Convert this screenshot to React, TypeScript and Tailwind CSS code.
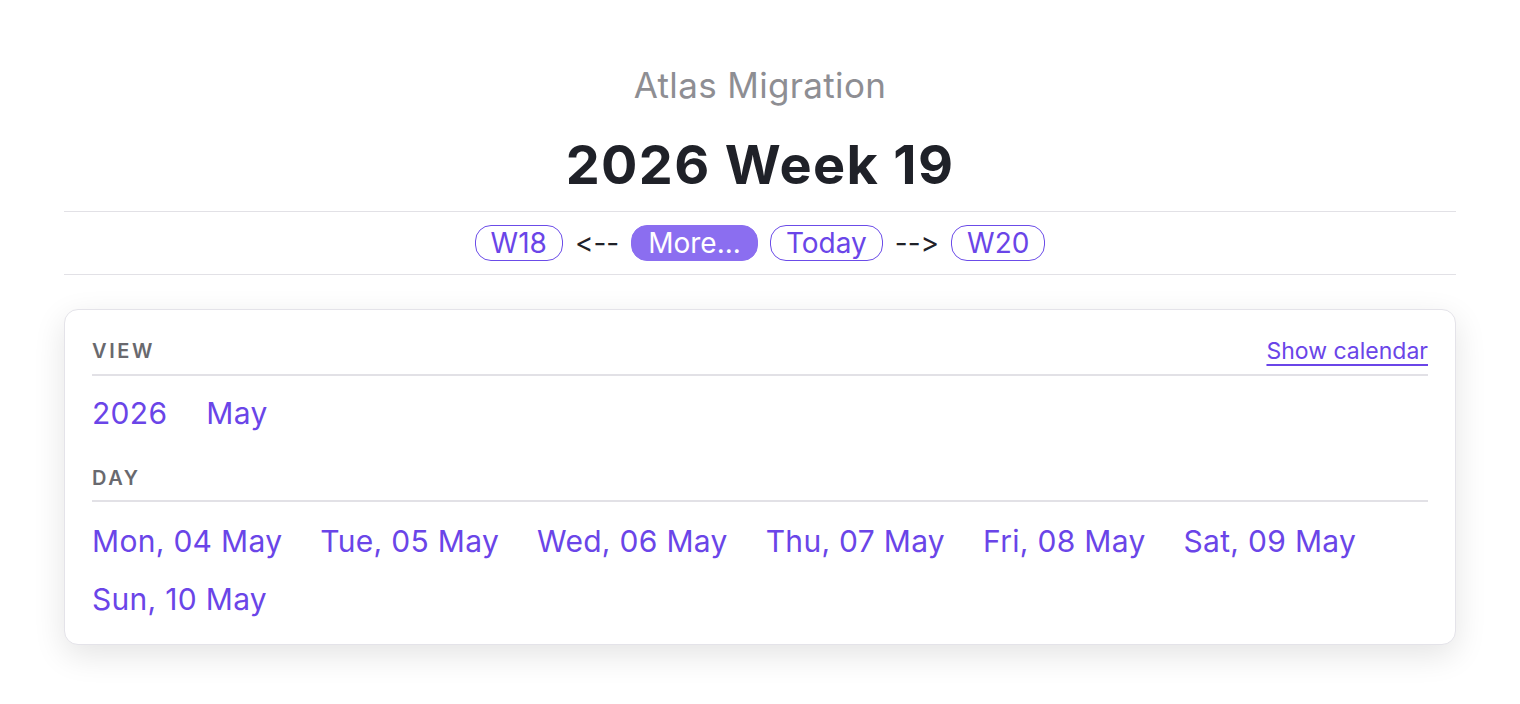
const days = [
  "Mon, 04 May",
  "Tue, 05 May",
  "Wed, 06 May",
  "Thu, 07 May",
  "Fri, 08 May",
  "Sat, 09 May",
  "Sun, 10 May",
];

function Pill({ label, filled }: { label: string; filled?: boolean }) {
  return (
    <a
      href="#"
      className={
        filled
          ? "flex h-9 items-center rounded-[16px] border-[1.5px] border-[#8b6ef0] bg-[#8b6ef0] px-[16px] text-[28px] leading-none text-white"
          : "flex h-9 items-center rounded-[16px] border-[1.5px] border-[#6b4ce8] px-[15px] text-[28px] leading-none text-[#6a45e8]"
      }
    >
      {label}
    </a>
  );
}

function Label({ children }: { children: string }) {
  return (
    <span className="text-[20px] font-semibold leading-6 tracking-[0.13em] text-[#69696e]">
      {children}
    </span>
  );
}

export default function App() {
  return (
    <div
      className="min-h-screen bg-white px-16 pt-[65px] [font-feature-settings:'calt'_0]"
      style={{ fontFamily: "Inter, 'Noto Sans', sans-serif" }}
    >
      <header className="text-center">
        <p className="text-[35px] leading-10 tracking-[0.01em] text-[#8e8e93]">Atlas Migration</p>
        <h1 className="mt-[30px] text-[54px] font-bold leading-[60px] tracking-[0.025em] text-[#1f2128]">
          2026 Week 19
        </h1>
      </header>

      <nav className="mt-[16px] flex items-center justify-center gap-3 border-y border-[#e2e1e6] py-[13px] text-[28px] leading-none text-[#1f2128]">
        <Pill label="W18" />
        <span>&lt;--</span>
        <Pill label="More..." filled />
        <Pill label="Today" />
        <span>--&gt;</span>
        <Pill label="W20" />
      </nav>

      <section className="mt-[34px] rounded-[14px] border border-[#e4e3e9] bg-white px-[27px] pb-[24px] pt-[29px] shadow-[0_10px_32px_rgba(0,0,0,0.11)]">
        <div className="flex items-end justify-between border-b-2 border-[#e2e1e6] pb-[11px]">
          <Label>VIEW</Label>
          <a href="#" className="text-[23px] leading-6 text-[#6a45e8] underline decoration-[1.5px] underline-offset-[5px]">
            Show calendar
          </a>
        </div>
        <div className="mt-4 flex gap-[39px] text-[30px] leading-[42px] tracking-[0.01em] text-[#6a45e8]">
          <a href="#">2026</a>
          <a href="#">May</a>
        </div>

        <div className="mt-8 border-b-2 border-[#e2e1e6] pb-[9px]">
          <Label>DAY</Label>
        </div>
        <div className="mt-[18px] flex flex-wrap gap-x-[38px] gap-y-4 text-[30px] leading-[42px] tracking-[0.01em] text-[#6a45e8]">
          {days.map((d) => (
            <a key={d} href="#">
              {d}
            </a>
          ))}
        </div>
      </section>
    </div>
  );
}
